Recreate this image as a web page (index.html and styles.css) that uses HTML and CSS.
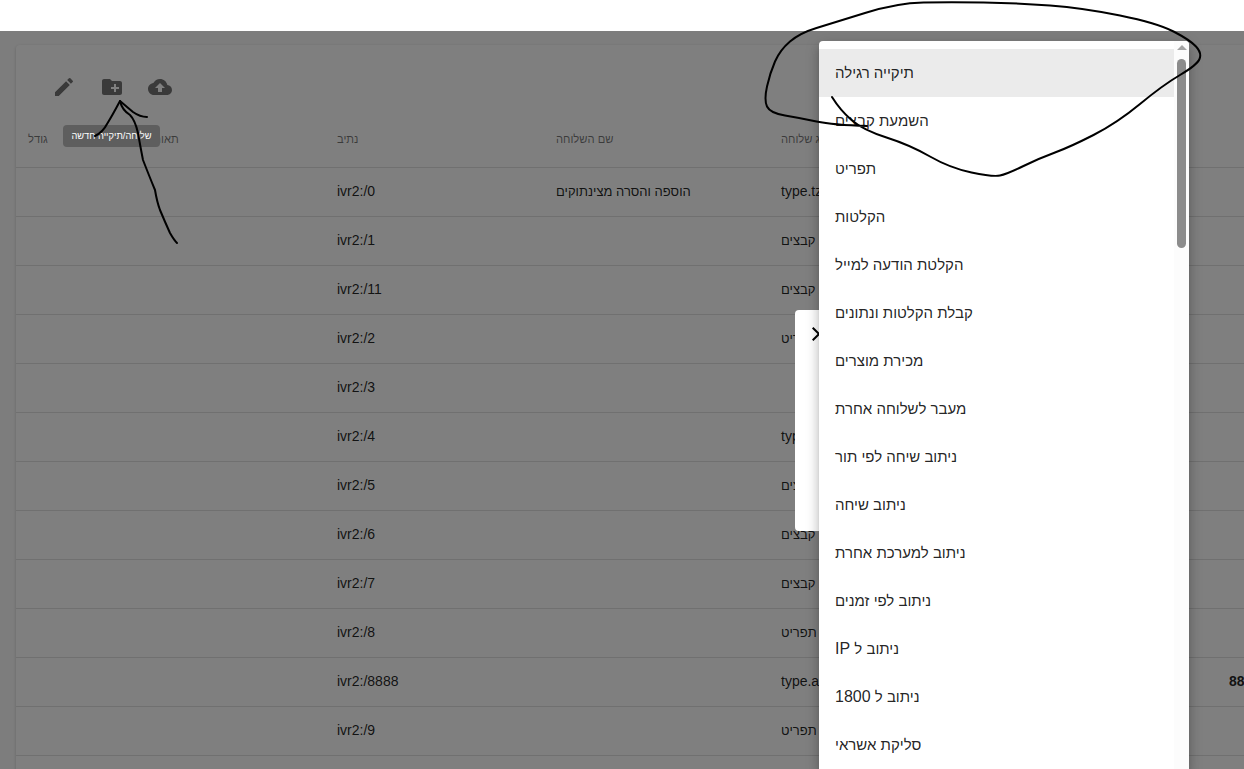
FILE: index.html
```html
<!DOCTYPE html>
<html lang="he">
<head>
<meta charset="utf-8">
<title>שלוחות</title>
<link rel="stylesheet" href="styles.css">
</head>
<body>
<div class="topbar"></div>
<main class="page">
  <section class="card">
    <div class="toolbar">
      <button class="icon-btn" aria-label="edit"><svg viewBox="0 0 24 24"><path d="M3 17.25V21h3.75L17.81 9.94l-3.75-3.75L3 17.25zM20.71 7.04a1 1 0 0 0 0-1.41l-2.34-2.34a1 1 0 0 0-1.41 0l-1.83 1.83 3.75 3.75 1.83-1.83z"/></svg></button>
      <button class="icon-btn" aria-label="new folder"><svg viewBox="0 0 24 24"><path d="M20 6h-8l-2-2H4c-1.11 0-1.99.89-1.99 2L2 18c0 1.11.89 2 2 2h16c1.11 0 2-.89 2-2V8c0-1.11-.89-2-2-2zm-1 8h-3v3h-2v-3h-3v-2h3V9h2v3h3v2z"/></svg></button>
      <button class="icon-btn" aria-label="upload"><svg viewBox="0 0 24 24"><path d="M19.35 10.04C18.67 6.59 15.64 4 12 4 9.11 4 6.6 5.64 5.35 8.04 2.34 8.36 0 10.91 0 14c0 3.31 2.69 6 6 6h13c2.76 0 5-2.24 5-5 0-2.64-2.05-4.78-4.65-4.96zM14 13v4h-4v-4H7l5-5 5 5h-3z"/></svg></button>
    </div>
    <div class="table">
      <div class="row head">
        <div class="cell" dir="rtl">גודל</div><div class="cell" dir="rtl">תאור</div><div class="cell" dir="rtl">נתיב</div><div class="cell" dir="rtl">שם השלוחה</div><div class="cell" dir="rtl">סוג שלוחה</div><div class="cell"></div>
      </div>
      <div class="row"><div class="cell"></div><div class="cell"></div><div class="cell">ivr2:/0</div><div class="cell he" dir="rtl">הוספה והסרה מצינתוקים</div><div class="cell">type.tzintukim</div><div class="cell"></div></div>
      <div class="row"><div class="cell"></div><div class="cell"></div><div class="cell">ivr2:/1</div><div class="cell"></div><div class="cell he" dir="rtl">השמעת קבצים</div><div class="cell"></div></div>
      <div class="row"><div class="cell"></div><div class="cell"></div><div class="cell">ivr2:/11</div><div class="cell"></div><div class="cell he" dir="rtl">השמעת קבצים</div><div class="cell"></div></div>
      <div class="row"><div class="cell"></div><div class="cell"></div><div class="cell">ivr2:/2</div><div class="cell"></div><div class="cell he" dir="rtl">תפריט</div><div class="cell"></div></div>
      <div class="row"><div class="cell"></div><div class="cell"></div><div class="cell">ivr2:/3</div><div class="cell"></div><div class="cell"></div><div class="cell"></div></div>
      <div class="row"><div class="cell"></div><div class="cell"></div><div class="cell">ivr2:/4</div><div class="cell"></div><div class="cell">type.tts</div><div class="cell"></div></div>
      <div class="row"><div class="cell"></div><div class="cell"></div><div class="cell">ivr2:/5</div><div class="cell"></div><div class="cell he" dir="rtl">השמעת קבצים</div><div class="cell"></div></div>
      <div class="row"><div class="cell"></div><div class="cell"></div><div class="cell">ivr2:/6</div><div class="cell"></div><div class="cell he" dir="rtl">השמעת קבצים</div><div class="cell"></div></div>
      <div class="row"><div class="cell"></div><div class="cell"></div><div class="cell">ivr2:/7</div><div class="cell"></div><div class="cell he" dir="rtl">השמעת קבצים</div><div class="cell"></div></div>
      <div class="row"><div class="cell"></div><div class="cell"></div><div class="cell">ivr2:/8</div><div class="cell"></div><div class="cell he" dir="rtl">תפריט</div><div class="cell"></div></div>
      <div class="row"><div class="cell"></div><div class="cell"></div><div class="cell">ivr2:/8888</div><div class="cell"></div><div class="cell">type.add</div><div class="cell strong">8888</div></div>
      <div class="row"><div class="cell"></div><div class="cell"></div><div class="cell">ivr2:/9</div><div class="cell"></div><div class="cell he" dir="rtl">תפריט</div><div class="cell"></div></div>
    </div>
  </section>
</main>
<div class="backdrop"></div>
<div class="tooltip" dir="rtl">שלוחה/תיקייה חדשה</div>
<div class="dialog">
  <svg class="close" viewBox="0 0 24 24"><path d="M19 6.41 17.59 5 12 10.59 6.41 5 5 6.41 10.59 12 5 17.59 6.41 19 12 13.41 17.59 19 19 17.59 13.41 12z"/></svg>
</div>
<div class="menu">
  <ul class="menu-list" dir="rtl">
    <li class="menu-item selected">תיקייה רגילה</li>
    <li class="menu-item">השמעת קבצים</li>
    <li class="menu-item">תפריט</li>
    <li class="menu-item">הקלטות</li>
    <li class="menu-item">הקלטת הודעה למייל</li>
    <li class="menu-item">קבלת הקלטות ונתונים</li>
    <li class="menu-item">מכירת מוצרים</li>
    <li class="menu-item">מעבר לשלוחה אחרת</li>
    <li class="menu-item">ניתוב שיחה לפי תור</li>
    <li class="menu-item">ניתוב שיחה</li>
    <li class="menu-item">ניתוב למערכת אחרת</li>
    <li class="menu-item">ניתוב לפי זמנים</li>
    <li class="menu-item">ניתוב ל <span class="latin">IP</span></li>
    <li class="menu-item">ניתוב ל <span class="latin">1800</span></li>
    <li class="menu-item">סליקת אשראי</li>
  </ul>
  <div class="scrollbar"><span class="scroll-arrow"></span><span class="scroll-thumb"></span></div>
</div>
<svg class="ink" viewBox="0 0 1244 769">
  <path d="M832,97 Q840,110 851.5,120 Q863,130 886.5,137.5 Q910,145 930,156.5 Q950,168 971.5,172.5 Q993,177 1000,175.5 Q1007,174 1023.5,166 Q1040,158 1055,152.5 Q1070,147 1093.5,135 Q1117,123 1140,104 Q1163,85 1180,75 Q1197,65 1199.5,59 Q1202,53 1196,46.5 Q1190,40 1173.5,31.5 Q1157,23 1120,15.5 Q1083,8 1050,5.5 Q1017,3 983.5,2.5 Q950,2 923.5,2.5 Q897,3 865,13 Q833,23 816.5,28 Q800,33 790,41.5 Q780,50 775,61.5 Q770,73 767,86.5 Q764,100 767,106.5 Q770,113 785,115.5 Q800,118 816.5,121.5 Q833,125 867,126"/>
  <path d="M95,136 Q103,132 107,124 Q112,116 120,101 Q127,107 133,112 Q140,117 147,117"/>
  <path d="M120,101 Q122,110 130,115 Q135,120 138,133 Q141,150 143,160 Q150,178 155,190 Q157,202 160,210 Q165,222 170,233 Q174,240 177,243"/>
</svg>
</body>
</html>
```

FILE: styles.css
```css
* { box-sizing: border-box; }
html, body { margin: 0; height: 100%; }
body {
  width: 1244px;
  height: 769px;
  overflow: hidden;
  position: relative;
  background: #fafafa;
  font-family: "Liberation Sans", Arial, sans-serif;
  color: rgba(0, 0, 0, 0.87);
}
.topbar { height: 31px; background: #fff; }
.page { padding: 14px 0 0 16px; height: 738px; overflow: hidden; }
.card {
  background: #fff;
  border-radius: 4px 0 0 4px;
  box-shadow: 0 1px 3px rgba(0, 0, 0, 0.2);
  overflow: hidden;
  height: 800px;
}
.toolbar { display: flex; padding: 18px 24px 0; height: 66px; }
.icon-btn {
  width: 48px;
  height: 48px;
  padding: 12px;
  border: 0;
  background: none;
  fill: rgba(0, 0, 0, 0.54);
}
.icon-btn svg { display: block; width: 24px; height: 24px; }
.row {
  display: grid;
  grid-template-columns: 127px 182px 219px 225px 448px 1fr;
  height: 49px;
  align-items: center;
  border-bottom: 1px solid rgba(0, 0, 0, 0.12);
  font-size: 14px;
  line-height: 17px;
  padding-bottom: 2px;
}
.head { height: 57px; font-size: 11.2px; color: rgba(0, 0, 0, 0.54); padding-bottom: 0; }
.cell {
  padding: 0 12px;
  text-align: left;
  white-space: nowrap;
  overflow: hidden;
}
.he { font-size: 13px; }
.strong { font-weight: 700; }
.backdrop {
  position: absolute;
  left: 0; right: 0; top: 31px; bottom: 0;
  background: rgba(0, 0, 0, 0.5);
}
.tooltip {
  position: absolute;
  left: 63px; top: 125px;
  width: 97px; height: 22px;
  line-height: 22px;
  text-align: center;
  font-size: 9.3px;
  color: #fff;
  font-weight: 500;
  background: #5e5e5e;
  border-radius: 4px;
}
.dialog {
  position: absolute;
  left: 795px; top: 310px;
  width: 320px; height: 221px;
  background: #fff;
  border-radius: 4px;
}
.close { display: block; margin: 12px 0 0 12px; width: 24px; height: 24px; }
.menu {
  position: absolute;
  left: 819px; top: 41px;
  width: 370px; height: 728px;
  display: flex;
  background: #fff;
  border-radius: 4px 4px 0 0;
  overflow: hidden;
  box-shadow: 0 5px 5px -3px rgba(0, 0, 0, 0.2), 0 8px 10px 1px rgba(0, 0, 0, 0.14), 0 3px 14px 2px rgba(0, 0, 0, 0.12);
}
.menu-list { flex: 1; margin: 0; padding: 8px 0; list-style: none; }
.menu-item {
  height: 48px;
  line-height: 47px;
  padding: 0 16px;
  font-size: 15px;
  text-align: left;
  white-space: nowrap;
}
.latin { font-size: 16px; }
.selected { background: rgba(0, 0, 0, 0.08); }
.scrollbar {
  width: 15px;
  background: #fcfcfc;
  display: flex;
  flex-direction: column;
  align-items: center;
  padding-top: 4px;
}
.scroll-arrow {
  width: 0; height: 0;
  border-left: 5px solid transparent;
  border-right: 5px solid transparent;
  border-bottom: 5px solid #a3a3a3;
}
.scroll-thumb {
  margin-top: 9px;
  width: 9px;
  height: 189px;
  border-radius: 5px;
  background: #8c8c8c;
}
.ink {
  position: absolute;
  left: 0; top: 0;
  width: 1244px; height: 769px;
  fill: none;
  stroke: #000;
  stroke-width: 2;
  stroke-linecap: round;
  stroke-linejoin: round;
}
```
